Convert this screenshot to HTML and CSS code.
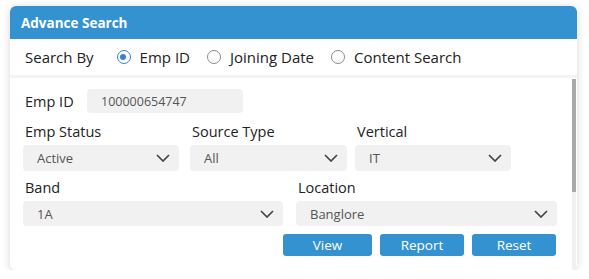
FILE: index.html
```html
<!DOCTYPE html>
<html lang="en">
<head>
    <meta charset="UTF-8" />
    <meta name="viewport" content="width=device-width, initial-scale=1.0"/>
    <title>Advance Search</title>
    <link rel="stylesheet" href="styles.css">
</head>
<body>

<div class="panel">

    <!-- Header -->
    <div class="panel-head">Advance Search</div>

    <!-- Search by options -->
    <div class="search-by">
        <span class="search-by-label">Search By</span>
        <label class="radio checked"><span class="dot"></span>Emp ID</label>
        <label class="radio"><span class="dot"></span>Joining Date</label>
        <label class="radio"><span class="dot"></span>Content Search</label>
    </div>

    <div class="panel-body">
        <div class="form-area">

            <div class="emp-row">
                <span class="field-label">Emp ID</span>
                <div class="text-input">100000654747</div>
            </div>

            <div class="row three">
                <div class="field w156">
                    <span class="field-label">Emp Status</span>
                    <div class="select"><span>Active</span><svg viewBox="0 0 14 8"><path d="M1 1l6 6 6-6"/></svg></div>
                </div>
                <div class="field w157">
                    <span class="field-label">Source Type</span>
                    <div class="select"><span>All</span><svg viewBox="0 0 14 8"><path d="M1 1l6 6 6-6"/></svg></div>
                </div>
                <div class="field w156">
                    <span class="field-label">Vertical</span>
                    <div class="select"><span>IT</span><svg viewBox="0 0 14 8"><path d="M1 1l6 6 6-6"/></svg></div>
                </div>
            </div>

            <div class="row two">
                <div class="field w260">
                    <span class="field-label">Band</span>
                    <div class="select"><span>1A</span><svg viewBox="0 0 14 8"><path d="M1 1l6 6 6-6"/></svg></div>
                </div>
                <div class="field w261">
                    <span class="field-label">Location</span>
                    <div class="select"><span>Banglore</span><svg viewBox="0 0 14 8"><path d="M1 1l6 6 6-6"/></svg></div>
                </div>
            </div>

            <div class="actions">
                <button class="btn w89">View</button>
                <button class="btn w84">Report</button>
                <button class="btn w84">Reset</button>
            </div>
        </div>

        <!-- scrollbar -->
        <div class="scrollbar"><div class="thumb"></div></div>
    </div>

</div>

</body>
</html>
```

FILE: styles.css
```css
* {
    box-sizing: border-box;
    margin: 0;
    padding: 0;
}

body {
    font-family: 'Open Sans', 'Liberation Sans', sans-serif;
    background: #fff;
    color: #222;
}

/* Card */
.panel {
    margin: 6px 0 0 10px;
    width: 567px;
    height: 264px;
    background: #fff;
    border-radius: 6px;
    box-shadow: 0 1px 8px rgba(0,0,0,0.16);
    overflow: hidden;
    display: flex;
    flex-direction: column;
}

.panel-head {
    flex-shrink: 0;
    height: 33px;
    background: #3592d0;
    color: #fff;
    font-weight: 700;
    font-size: 13.5px;
    padding-left: 11px;
    display: flex;
    align-items: center;
}

/* Search by row */
.search-by {
    flex-shrink: 0;
    height: 39px;
    display: flex;
    align-items: center;
    padding-left: 15px;
    font-size: 15px;
    color: #222;
    border-bottom: 3px solid #f3f3f3;
}
.search-by-label {
    margin-right: 23px;
}
.radio {
    display: flex;
    align-items: center;
    margin-right: 17px;
}
.radio .dot {
    width: 14px;
    height: 14px;
    border: 1px solid #8a8a8a;
    border-radius: 50%;
    margin-right: 9px;
    position: relative;
}
.radio.checked .dot {
    border: 1.5px solid #3b7fd1;
}
.radio.checked .dot::after {
    content: "";
    position: absolute;
    left: 2.5px;
    top: 2.5px;
    width: 6px;
    height: 6px;
    border-radius: 50%;
    background: #3b7fd1;
}

/* Body */
.panel-body {
    flex: 1;
    min-height: 0;
    display: flex;
    overflow: hidden;
}
.form-area {
    flex: 1;
    padding: 11px 14px 0 13px;
}
.scrollbar {
    width: 4px;
    margin-right: 1px;
    margin-top: 1px;
    background: #f1f1f1;
}
.thumb {
    height: 113px;
    background: #a9a9a9;
}

.field-label {
    font-size: 14.5px;
    color: #222;
}

.emp-row {
    display: flex;
    align-items: center;
    height: 24px;
}
.emp-row .field-label {
    width: 64px;
    padding-left: 2px;
}
.text-input {
    width: 156px;
    height: 24px;
    background: #f1f1f1;
    border-radius: 4px;
    font-size: 12.5px;
    color: #555;
    padding-left: 14px;
    display: flex;
    align-items: center;
}

.row {
    display: flex;
}
.row.three {
    margin-top: 8px;
    gap: 11px;
}
.row.three .field + .field + .field {
    margin-left: -3px;
}
.row.two {
    margin-top: 6px;
    gap: 13px;
}
.field {
    display: flex;
    flex-direction: column;
}
.field .field-label {
    height: 24px;
    line-height: 22px;
    padding-left: 2px;
}
.w156 { width: 156px; }
.w157 { width: 157px; }
.w260 { width: 260px; }
.w261 { width: 261px; }

.select {
    height: 26px;
    background: #f1f1f1;
    border-radius: 4px;
    display: flex;
    align-items: center;
    justify-content: space-between;
    padding: 0 9px 0 14px;
    font-size: 13px;
    color: #555;
}
.select svg {
    width: 14px;
    height: 8px;
    fill: none;
    stroke: #444;
    stroke-width: 1.7;
}
.row.two .select {
    height: 25px;
}

/* Buttons */
.actions {
    margin-top: 8px;
    display: flex;
    justify-content: flex-end;
    gap: 8px;
    padding-right: 2px;
}
.btn {
    height: 22px;
    background: #3592d0;
    color: #fff;
    border: none;
    border-radius: 3px;
    font-family: inherit;
    font-size: 13.5px;
    cursor: pointer;
}
.w89 { width: 89px; }
.w84 { width: 84px; }
```
